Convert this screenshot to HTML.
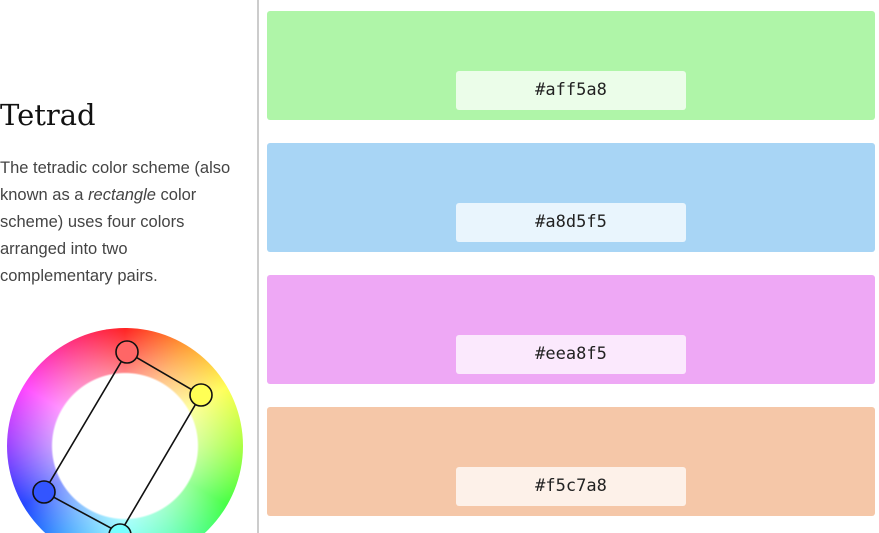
<!DOCTYPE html>
<html><head><meta charset="utf-8"><style>
html,body{margin:0;padding:0;background:#fff;width:879px;height:533px;overflow:hidden}
#w{width:879px;height:533px;overflow:hidden;position:relative}
h1{position:absolute;left:0;top:98px;margin:0;font-family:"DejaVu Serif","Liberation Serif",serif;font-weight:normal;font-size:29px;color:#111}
p{position:absolute;left:0;top:155px;width:258px;margin:0;font-family:"Liberation Sans",sans-serif;font-size:16.5px;line-height:27px;color:#444;white-space:nowrap}
.div{position:absolute;left:257px;top:0;width:2px;height:533px;background:#ccc}
.sw{position:absolute;left:267px;width:608px;height:109px;border-radius:3px}
.lb{position:absolute;left:189px;top:60px;width:230px;height:39px;border-radius:3px;background:rgba(255,255,255,.75);font-family:"DejaVu Sans Mono","Liberation Mono",monospace;font-size:17px;color:#222;text-align:center;line-height:39px}
.wheel{position:absolute;left:7px;top:328px;width:236px;height:236px;border-radius:50%;background:conic-gradient(#f22 0deg,#f93 30deg,#ff5 60deg,#af4 90deg,#4f4 120deg,#5fa 150deg,#6ff 180deg,#39f 215deg,#24f 240deg,#94f 270deg,#f4f 300deg,#f38 330deg,#f22 360deg)}
.fade{position:absolute;left:7px;top:328px;width:236px;height:236px;border-radius:50%;background:radial-gradient(circle closest-side,#fff 0,#fff 72px,rgba(255,255,255,.45) 74px,rgba(255,255,255,0) 118px)}
svg{position:absolute;left:0;top:0}
</style></head><body><div id="w">
<h1>Tetrad</h1>
<p>The tetradic color scheme (also<br>known as a <i>rectangle</i> color<br>scheme) uses four colors<br>arranged into two<br>complementary pairs.</p>
<div class="wheel"></div><div class="fade"></div>
<svg width="258" height="533"><g stroke="#111" stroke-width="1.6" fill="none">
<polygon points="127,352 201,395 120,533 44,492"/>
<circle cx="127" cy="352" r="11" fill="#f66"/>
<circle cx="201" cy="395" r="11" fill="#ff5"/>
<circle cx="44" cy="492" r="11" fill="#35f"/>
<circle cx="120" cy="535" r="11" fill="#7ff"/>
</g></svg>
<div class="div"></div>
<div class="sw" style="top:11px;background:#aff5a8"><div class="lb">#aff5a8</div></div>
<div class="sw" style="top:143px;background:#a8d5f5"><div class="lb">#a8d5f5</div></div>
<div class="sw" style="top:275px;background:#eea8f5"><div class="lb">#eea8f5</div></div>
<div class="sw" style="top:407px;background:#f5c7a8"><div class="lb">#f5c7a8</div></div>
</div></body></html>
